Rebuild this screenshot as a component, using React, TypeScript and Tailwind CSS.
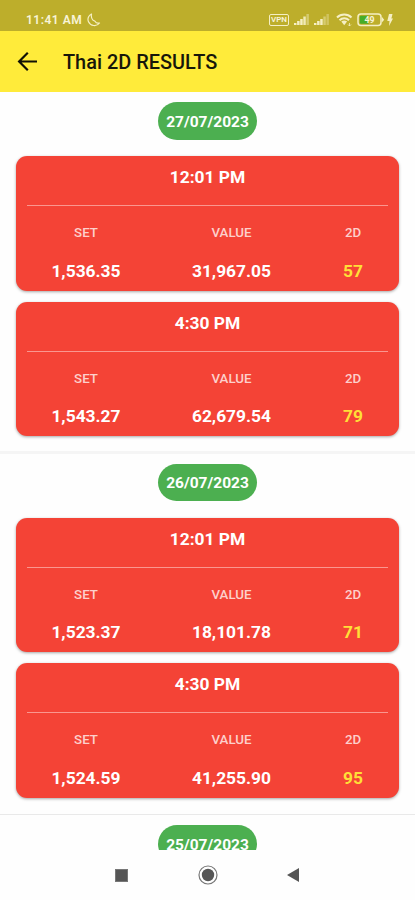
import React from 'react';

interface Result {
  time: string;
  set: string;
  value: string;
  twoD: string;
}

interface DayResults {
  date: string;
  results: Result[];
}

const days: DayResults[] = [
  {
    date: '27/07/2023',
    results: [
      { time: '12:01 PM', set: '1,536.35', value: '31,967.05', twoD: '57' },
      { time: '4:30 PM', set: '1,543.27', value: '62,679.54', twoD: '79' },
    ],
  },
  {
    date: '26/07/2023',
    results: [
      { time: '12:01 PM', set: '1,523.37', value: '18,101.78', twoD: '71' },
      { time: '4:30 PM', set: '1,524.59', value: '41,255.90', twoD: '95' },
    ],
  },
  { date: '25/07/2023', results: [] },
];

const Signal: React.FC<{ weak?: boolean }> = ({ weak = false }) => (
  <svg width="15" height="11" viewBox="0 0 15 11" fill="#f5efc4">
    <path d="M0 9h2.500v2H0z M3.100 7h2.500v4H3.100z M6.200 5h2.500v6H6.200z" />
    <path d="M9.300 2.500h2.500V11H9.300z" opacity={weak ? 0.45 : 0.9} />
    <path d="M12.400 0h2.500v11h-2.500z" opacity={weak ? 0.35 : 0.45} />
  </svg>
);

const StatusBar: React.FC = () => (
  <div className="flex h-[31px] shrink-0 items-center bg-[#bdae2b] pt-2 pr-[22px] pl-[26px] text-[#f8f4d8]">
    <span className="text-[12px] font-semibold tracking-[0.5px]">11:41 AM</span>
    <svg className="ml-[5px]" width="14" height="14" viewBox="0 0 14 14" fill="none" stroke="#f5efc4" strokeWidth="1.200" strokeLinejoin="round">
      <path d="M4.500 1C1.500 2.200.2 5.800 1.500 8.800c1.900 4.400 8.300 5.100 11 1.200C10.200 10.600 8.800 9.800 8 8.200L5.800 7C4.300 5 4 3 4.500 1z" />
    </svg>
    <div className="ml-auto flex items-center">
      <span className="flex h-[12px] w-[20px] items-center justify-center rounded-[2px] border border-[#f5efc4] text-[8px] font-semibold">
        VPN
      </span>
      <span className="ml-[5px]"><Signal /></span>
      <span className="ml-[5px]"><Signal weak /></span>
      <svg className="ml-[7px]" width="17" height="14" viewBox="0 0 17 14" fill="none" stroke="#f5efc4" strokeWidth="2">
        <path d="M1 4.500c4-4 10.500-4 14.500 0M3.500 7.200c2.700-2.700 6.800-2.700 9.500 0" />
        <path d="M5.300 8.600q2.900-2 5.800 0l-2.900 3.600z" fill="#f5efc4" stroke="none" />
        <path d="M13.500 10v3m-1.500-1.500l1.500 1.500 1.500-1.500" strokeWidth=".8" />
      </svg>
      <svg className="ml-[4px]" width="28" height="14" viewBox="0 0 28 14">
        <rect x="1" y="1" width="23" height="11.500" rx="3" fill="#bdae2b" stroke="#f5efc4" strokeWidth="1.500" />
        <path d="M4 2.800h7.500v8H4q-1.200 0-1.200-1.200V4Q2.800 2.800 4 2.800z" fill="#46ad27" />
        <path d="M24.800 3.800l2.400 2.900-2.400 2.900z" fill="#f5efc4" />
        <text x="12.500" y="9.900" textAnchor="middle" fontSize="8.800" fontWeight="700" fill="#f8f4d8">49</text>
      </svg>
      <svg className="ml-[2px]" width="6" height="12" viewBox="0 0 6 12" fill="#f5efc4">
        <path d="M2 0h3.500L4.400 4.500H6L2 12l.5-5H.3z" />
      </svg>
    </div>
  </div>
);

const Header: React.FC = () => (
  <div className="flex h-[61px] shrink-0 items-center bg-[#ffeb3a] pl-[17px]">
    <svg width="21" height="20" viewBox="0 0 21 20" fill="none" stroke="#111105" strokeWidth="2.200">
      <path d="M20 9.500H2.500M10.800.8L2.100 9.500l8.700 8.700" />
    </svg>
    <h1 className="ml-[25px] pt-[2px] text-[19.9px] font-medium text-[#17160a]">Thai 2D RESULTS</h1>
  </div>
);

const ResultCard: React.FC<{ result: Result }> = ({ result }) => (
  <div className="h-[134.5px] rounded-[11px] bg-[#f44336] px-[11px] text-center text-white shadow-[0_1px_3px_rgba(0,0,0,0.35)]">
    <div className="flex h-[50px] items-center justify-center border-b border-[#fa978f] pb-[6px] text-[17.400px] font-bold">
      {result.time}
    </div>
    <div className="grid grid-cols-[118px_173px_70px] pt-[17px] text-[13.300px] leading-5 font-medium text-[#fdd0cc]">
      <span>SET</span>
      <span>VALUE</span>
      <span>2D</span>
    </div>
    <div className="grid grid-cols-[118px_173px_70px] pt-[15.500px] text-[17.400px] leading-6 font-bold">
      <span>{result.set}</span>
      <span>{result.value}</span>
      <span className="text-[#ffdf38]">{result.twoD}</span>
    </div>
  </div>
);

const DaySection: React.FC<{ day: DayResults }> = ({ day }) => (
  <section className="shrink-0 border-b-[1.5px] border-[#e9e9e9] px-4 pt-[10px] pb-[16.5px] first:border-b-[3px] first:border-[#f5f5f5] first:pb-[14.5px]">
    <div className="mx-auto mb-[16.5px] flex h-[37.5px] w-[99px] items-center justify-center rounded-full bg-[#4caf50] pt-[3px] text-[15.5px] font-bold text-white">
      {day.date}
    </div>
    <div className="flex flex-col gap-[11px]">
      {day.results.map((result) => (
        <ResultCard key={result.time} result={result} />
      ))}
    </div>
  </section>
);

const NavBar: React.FC = () => (
  <div className="flex h-[50px] shrink-0 items-center justify-between bg-[#fefefe] pr-[116px] pl-[115px]">
    <span className="h-[13px] w-[13px] border border-[#777] bg-[#555]" />
    <svg width="20" height="20" viewBox="0 0 20 20">
      <circle cx="10" cy="10" r="9" fill="none" stroke="#777" strokeWidth="1.200" />
      <circle cx="10" cy="10" r="6.200" fill="#555" />
    </svg>
    <svg width="12" height="14" viewBox="0 0 12 14" fill="#555">
      <path d="M12 0v14L0 7z" />
    </svg>
  </div>
);

export default function App() {
  return (
    <div className="flex h-[900px] w-[415px] flex-col overflow-hidden bg-white font-['Roboto',sans-serif]">
      <StatusBar />
      <Header />
      <main className="flex min-h-0 flex-1 flex-col overflow-hidden bg-[#fefefe]">
        {days.map((day) => (
          <DaySection key={day.date} day={day} />
        ))}
      </main>
      <NavBar />
    </div>
  );
}
